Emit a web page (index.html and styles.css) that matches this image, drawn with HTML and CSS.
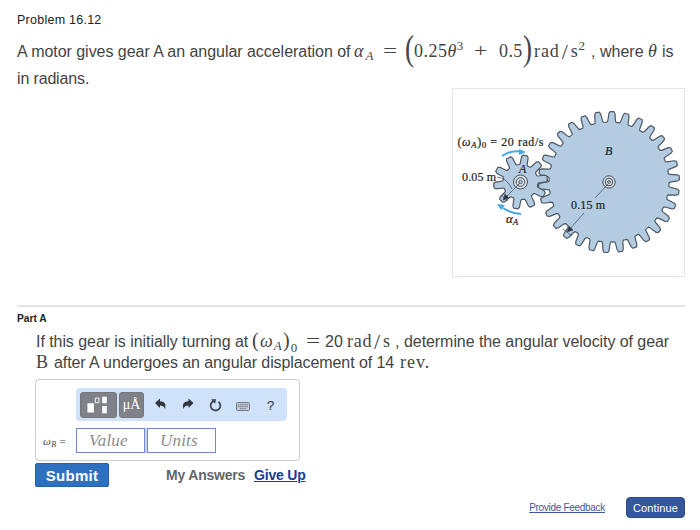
FILE: index.html
```html
<!DOCTYPE html>
<html lang="en">
<head>
    <meta charset="UTF-8">
    <meta name="viewport" content="width=device-width, initial-scale=1.0">
    <title>Problem 16.12</title>
    <link rel="stylesheet" href="styles.css">
</head>
<body>
    <div class="page">
        <h1>Problem 16.12</h1>
        <div class="line statement">
            <span class="w-motor">A motor gives gear A an angular acceleration of</span>
            <span class="math w-alpha"><i>α</i><sub><i>A</i></sub></span>
            <span class="math w-eq">=</span>
            <span class="math w-paren paren">(</span>
            <span class="math w-theta3">0.25<i>θ</i><sup>3</sup></span>
            <span class="math w-plus">+</span>
            <span class="math w-half">0.5</span>
            <span class="math w-close paren">)</span>
            <span class="math w-rads2">rad<span class="slash">/</span>s<sup>2</sup></span>
            <span class="w-comma">,</span>
            <span class="w-where">where</span>
            <span class="math w-theta"><i>θ</i></span>
            <span>is</span>
        </div>
        <div class="line second">in radians.</div>

        <div class="figure">
            <svg width="231" height="187" viewBox="453 89 231 187">
                <path id="gear-b" class="gear" />
                <path id="gear-a" class="gear" />
                <g class="hub">
                    <circle cx="520.5" cy="182" r="7" />
                    <circle cx="520.5" cy="182" r="4.3" />
                    <circle cx="520.5" cy="182" r="1.6" />
                    <circle cx="609" cy="182" r="6.2" />
                    <circle cx="609" cy="182" r="3.8" />
                    <circle cx="609" cy="182" r="1.4" />
                </g>
                <g class="radius">
                    <path d="M520 183L503 200M497 177Q507 178 512 189M501 195l7 6M608 184L595 198M584 213L568 231M563 229l9 7" />
                    <path class="tip" d="M503 200l2-6 4 4zM567 232l2-6 4 4z" />
                </g>
                <g class="turn">
                    <path d="M502 156Q511 150 520 151.500" />
                    <path class="head" d="M526 152l-7-3v6z" />
                    <path d="M521 214Q510 213 503 208" />
                    <path class="head" d="M497 204l8 1-4 5z" />
                </g>
                <text x="457.500" y="146" textLength="86">(<tspan class="it">ω</tspan><tspan class="it small" dy="2">A</tspan><tspan dy="-2">)</tspan><tspan class="small" dy="2">0</tspan><tspan dy="-2"> = 20 rad/s</tspan></text>
                <text x="462" y="181" textLength="34">0.05 m</text>
                <text x="571" y="209" textLength="34">0.15 m</text>
                <text class="it" x="605" y="155">B</text>
                <text class="it" x="519" y="173">A</text>
                <text class="it alpha" x="506" y="223">α<tspan class="small" dy="2">A</tspan></text>
            </svg>
        </div>

        <div class="part">
            <h2>Part A</h2>
            <div class="line question">
                <span class="w-if">If this gear is initially turning at</span>
                <span class="math w-omega"><span class="thin">(</span><i>ω</i><sub><i>A</i></sub><span class="thin">)</span><sub class="zero">0</sub></span>
                <span class="math w-eq2">=</span>
                <span class="w-20">20</span>
                <span class="math w-rads">rad<span class="slash">/</span>s</span>
                <span class="w-comma2">,</span>
                <span class="w-determine">determine the angular velocity of gear</span>
            </div>
            <div class="line question last">
                <span class="math w-b">B</span>
                <span class="w-after">after A undergoes an angular displacement of 14</span>
                <span class="math w-rev">rev.</span>
            </div>

            <form class="answer">
                <div class="toolbar">
                    <button type="button" class="tool templates">
                        <svg width="36" height="26" viewBox="0 0 36 26">
                            <path d="M6 11h7v10H6zM22 4h5v7h-5zM22 14h5v8h-5z" fill="#fff" />
                            <path d="M14.500 5.500h4v5h-4z" fill="none" stroke="#fff" />
                        </svg>
                    </button>
                    <button type="button" class="tool units">μÅ</button>
                    <svg class="icons" width="140" height="26" viewBox="146 391 140 26">
                        <path d="M155 402l5-4.500v2.800c4.500 0 6.500 2.800 5 7.700-1-2.500-2.300-3.400-5-3.400v2.400z" fill="#30343d" />
                        <path d="M193.500 402l-5-4.500v2.800c-4.500 0-6.500 2.800-5 7.700 1-2.500 2.300-3.400 5-3.400v2.400z" fill="#30343d" />
                        <path d="M218.500 400.700a4.900 4.900 0 1 1-5-.6" fill="none" stroke="#3f4651" stroke-width="1.800" />
                        <path d="M211 398.500l5-.5-.8 4.800z" fill="#3f4651" />
                        <rect x="236.500" y="401.500" width="13" height="8" rx="1" fill="#c3cad6" stroke="#737a87" />
                        <path d="M238 403.700h10M238 405.600h10M240 407.700h6" stroke="#737a87" stroke-dasharray="1.500 .6" />
                        <text x="267" y="409">?</text>
                    </svg>
                </div>
                <div class="entry">
                    <label class="math"><i>ω</i><sub><i>B</i></sub> =</label>
                    <div class="fields">
                        <div class="field">Value</div>
                        <div class="field">Units</div>
                    </div>
                </div>
            </form>
            <div class="actions">
                <button type="button" class="submit">Submit</button>
                <span class="my-answers">My Answers</span>
                <a href="#" class="give-up">Give Up</a>
            </div>
        </div>

        <div class="footer">
            <a href="#">Provide Feedback</a>
            <button type="button" class="continue">Continue</button>
        </div>
    </div>
    <script src="gears.js"></script>
</body>
</html>
```

FILE: styles.css
```css
body {
    margin: 0;
    background: #fff;
    color: #444;
    font-family: "Liberation Sans", Arial, sans-serif;
}
.page {
    box-sizing: border-box;
    width: 700px;
    height: 530px;
    padding: 12px 15px 0 17px;
    overflow: hidden;
}
h1 {
    margin: 0;
    height: 16px;
    font-size: 12.5px;
    line-height: 16px;
    font-weight: normal;
    letter-spacing: 0.25px;
    color: #222;
}
.line {
    display: flex;
    align-items: baseline;
    white-space: nowrap;
    font-size: 16px;
    line-height: 20px;
}
.line > span {
    flex: none;
}
.statement {
    height: 28px;
    margin-top: 13px;
}
.second {
    height: 19px;
    letter-spacing: -.15px;
}
.math {
    font-family: "Liberation Serif", "Times New Roman", serif;
    font-size: 18px;
}
.math sub, .math sup {
    font-size: 13px;
    line-height: 0;
}
.math sub {
    vertical-align: -3px;
}
.math sup {
    vertical-align: 7px;
}
.slash {
    font-size: 22px;
    line-height: 0;
    vertical-align: -2px;
    margin: 0 2px;
}
.w-motor {
    width: 337px;
    letter-spacing: -.04px;
}
.w-alpha {
    width: 29px;
    letter-spacing: 2px;
}
.w-eq {
    width: 22px;
    transform: scaleX(1.4);
    transform-origin: left;
}
.w-paren, .w-close {
    width: 9px;
}
.paren {
    font-size: 36px;
    line-height: 0;
    transform: translateY(3px) scaleX(.75);
    transform-origin: left;
}
.w-theta3 {
    width: 60px;
    letter-spacing: .5px;
}
.w-plus {
    width: 25px;
    transform: scaleX(1.3);
    transform-origin: left;
}
.w-half {
    width: 24px;
    letter-spacing: .4px;
}
.w-close {
    width: 11px;
}
.w-rads2 {
    width: 57px;
    letter-spacing: .9px;
}
.w-comma {
    width: 9px;
}
.w-where {
    width: 48px;
}
.w-theta {
    width: 14px;
}
.figure {
    width: 231px;
    height: 187px;
    margin-left: 435px;
    border: 1px solid #e3e5ee;
}
.figure svg {
    display: block;
}
.gear {
    fill: #b4cce2;
    stroke: #4e5964;
    stroke-width: 1.2;
    stroke-linejoin: round;
}
.hub circle {
    fill: #d5dde5;
    stroke: #48515c;
}
.radius path {
    fill: none;
    stroke: #4a5663;
    stroke-width: .8;
}
.radius .tip {
    fill: #27323e;
}
.turn path {
    fill: none;
    stroke: #45a8df;
    stroke-width: 2;
}
.turn .head {
    fill: #45a8df;
    stroke: none;
}
.figure text {
    font-family: "Liberation Serif", "Times New Roman", serif;
    font-size: 12px;
    fill: #222;
    stroke: #222;
    stroke-width: .2;
}
.figure .it {
    font-style: italic;
}
.figure .small {
    font-size: 9px;
}
.figure .alpha {
    font-size: 13px;
}
.part {
    margin-top: 28px;
    border-top: 2px solid #e3e3e3;
}
h2 {
    margin: 5px 0 0;
    height: 13px;
    font-size: 10.2px;
    line-height: 13px;
    color: #222;
}
.question {
    height: 21px;
    margin: 6px 0 0 19px;
}
.last {
    margin-top: 0;
}
.w-if {
    width: 216px;
    letter-spacing: -.06px;
}
.w-omega {
    width: 54px;
    letter-spacing: 1.2px;
}
.thin {
    font-size: 20px;
    line-height: 0;
}
.math .zero {
    vertical-align: -5px;
}
.w-eq2 {
    width: 19px;
    transform: scaleX(1.4);
    transform-origin: left;
}
.w-20 {
    width: 22px;
}
.w-rads {
    width: 48px;
    letter-spacing: .7px;
}
.w-comma2 {
    width: 9px;
}
.w-determine {
    letter-spacing: -.07px;
}
.w-b {
    width: 18px;
}
.w-after {
    width: 346px;
    letter-spacing: -.09px;
}
.w-rev {
    letter-spacing: 1px;
}
.answer {
    box-sizing: border-box;
    width: 265px;
    height: 82px;
    margin: 6px 0 0 18px;
    padding: 8px 0 0 7px;
    border: 1px solid #ccc;
    border-radius: 4px;
}
.toolbar {
    display: flex;
    align-items: center;
    gap: 2px;
    box-sizing: border-box;
    width: 211px;
    height: 33px;
    margin-left: 33px;
    padding-left: 4px;
    border-radius: 4px;
    background: #d0e1fa;
}
.tool {
    height: 26px;
    padding: 0;
    border: 1px solid #74767c;
    border-radius: 3px;
    background: #7f8188;
    color: #fff;
}
.tool svg {
    display: block;
}
.templates {
    width: 37px;
}
.templates svg {
    width: 35px;
    height: 24px;
}
.units {
    width: 25px;
    font: 14px "Liberation Serif", serif;
}
.icons {
    flex: none;
}
.icons text {
    font: 13px "Liberation Sans", sans-serif;
    fill: #3f4651;
    stroke: #3f4651;
    stroke-width: .2;
}
.entry {
    display: flex;
    align-items: center;
    margin-top: 7px;
}
.entry label {
    width: 33px;
    font-size: 11px;
    letter-spacing: .4px;
    white-space: nowrap;
}
.entry label sub {
    font-size: 8px;
    vertical-align: -2px;
}
.fields {
    display: flex;
    gap: 2px;
    background: #c5d3f0;
}
.field {
    box-sizing: border-box;
    width: 69px;
    height: 25px;
    padding-left: 12px;
    border: 1px solid #7389cc;
    background: #fff;
    color: #8d8d8d;
    font: italic 17px/23px "Liberation Serif", "Times New Roman", serif;
    letter-spacing: .2px;
}
.actions {
    display: flex;
    align-items: center;
    margin: 2px 0 0 18px;
    font-size: 14px;
    font-weight: bold;
    letter-spacing: -.2px;
}
.submit {
    width: 74px;
    height: 24px;
    padding: 0;
    border: 1px solid #245fa8;
    border-radius: 2px;
    background: #2d70bf;
    color: #fff;
    font: bold 15px "Liberation Sans", Arial, sans-serif;
    letter-spacing: .3px;
}
.my-answers {
    width: 88px;
    margin-left: 57px;
    color: #666;
}
.give-up {
    color: #213a99;
}
.footer {
    display: flex;
    justify-content: flex-end;
    align-items: center;
    margin-top: 10px;
    font-size: 10px;
}
.footer a {
    color: #40579a;
    letter-spacing: -.3px;
}
.continue {
    width: 59px;
    height: 21px;
    margin-left: 21px;
    padding: 0;
    border: 1px solid #2b4a87;
    border-radius: 4px;
    background: #35589c;
    color: #fff;
    font: 11px "Liberation Sans", Arial, sans-serif;
    letter-spacing: .15px;
}
```

FILE: gears.js
```js
// angle is the direction of the first tooth, in degrees from the top
function gearPath(cx, cy, root, outer, teeth, angle) {
    const step = 360 / teeth;
    // rounded tooth, as [part of a step, part of the tooth height]
    const profile = [[-0.36, 0], [-0.3, 0.12], [-0.21, 0.82], [-0.13, 1], [0.13, 1], [0.21, 0.82], [0.3, 0.12], [0.36, 0]];
    const points = [];
    for (let i = 0; i < teeth; i++) {
        profile.forEach(function(p) {
            const a = (angle + (i + p[0]) * step) * Math.PI / 180;
            const r = root + (outer - root) * p[1];
            points.push((cx + r * Math.sin(a)).toFixed(2) + ' ' + (cy - r * Math.cos(a)).toFixed(2));
        });
    }
    return 'M' + points.join('L') + 'Z';
}

document.getElementById('gear-b').setAttribute('d', gearPath(609, 182, 60, 70.5, 30, 2.5));
document.getElementById('gear-a').setAttribute('d', gearPath(520.5, 182, 17.5, 27, 10, 10));
```
